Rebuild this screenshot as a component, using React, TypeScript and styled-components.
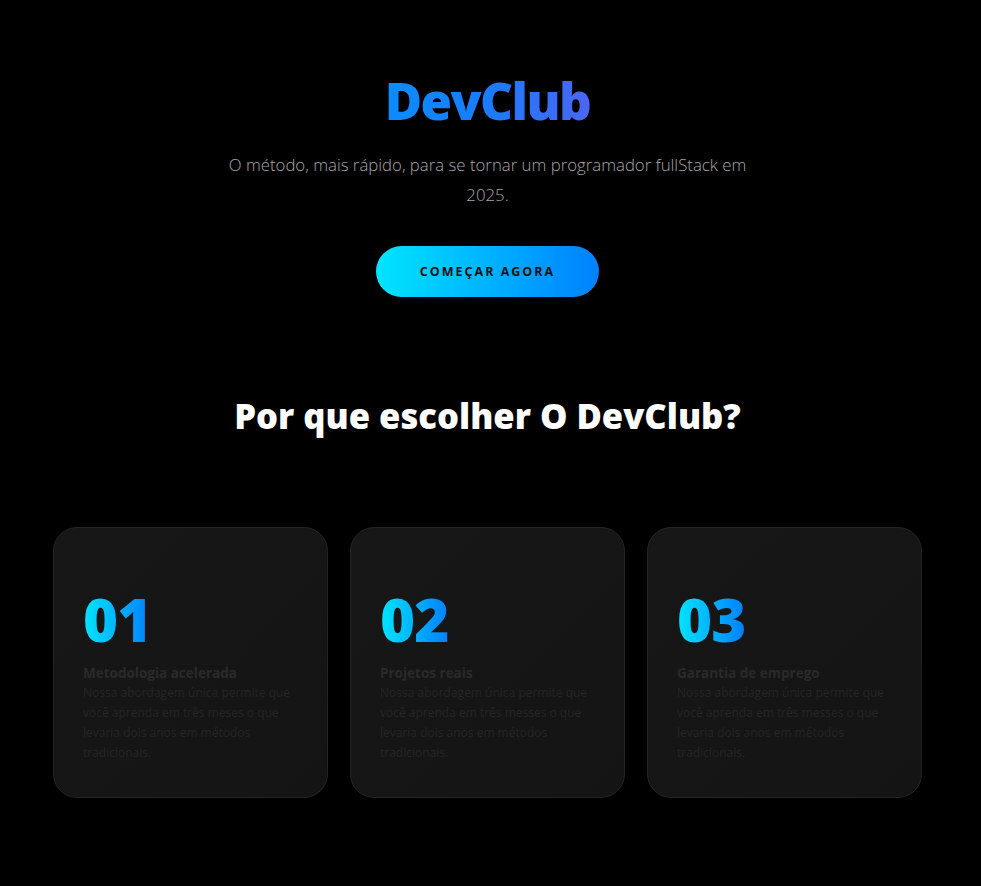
import React from "react";
import styled, { createGlobalStyle } from "styled-components";

const Global = createGlobalStyle`
  html, body { margin: 0; padding: 0; background: #000; }
  body { font-family: "Open Sans", "Noto Sans", sans-serif; color: #fff; }
  * { box-sizing: border-box; }
`;

const Page = styled.main`
  min-height: 886px;
  background: #000;
  padding-right: 6px;
  display: flex;
  flex-direction: column;
  align-items: center;
`;

const Hero = styled.section`
  display: flex;
  flex-direction: column;
  align-items: center;
  padding-top: 68px;
`;

const Logo = styled.h1`
  margin: 0;
  font-size: 51px;
  font-weight: 800;
  line-height: 64px;
  letter-spacing: -1.6px;
  background: linear-gradient(90deg, #0a8cff 0%, #1a7cff 50%, #4a66f2 100%);
  -webkit-background-clip: text;
  background-clip: text;
  color: transparent;
`;

const Subtitle = styled.p`
  margin: 18px 0 0;
  max-width: 540px;
  text-align: center;
  font-size: 16.8px;
  font-weight: 300;
  line-height: 30px;
  color: #a8a8a8;
`;

const Cta = styled.button`
  margin-top: 36px;
  width: 223px;
  height: 51px;
  border: none;
  border-radius: 26px;
  background: linear-gradient(90deg, #00e5ff 0%, #0080ff 100%);
  font-family: "Open Sans", sans-serif;
  font-size: 12.5px;
  font-weight: 700;
  letter-spacing: 2px;
  color: #111;
  cursor: pointer;
`;

const Features = styled.section`
  display: flex;
  flex-direction: column;
  align-items: center;
  padding-top: 96px;
  width: 100%;
`;

const SectionTitle = styled.h2`
  margin: 0;
  font-size: 34.6px;
  font-weight: 800;
  line-height: 46px;
  color: #fff;
`;

const Grid = styled.div`
  margin-top: 88px;
  display: grid;
  grid-template-columns: repeat(3, 275px);
  gap: 22px;
`;

const Card = styled.article`
  height: 271px;
  border-radius: 24px;
  border: 1px solid #242424;
  background: linear-gradient(135deg, #171717 0%, #141414 100%);
  padding: 55px 30px 0 29px;
  display: flex;
  flex-direction: column;
`;

const Num = styled.span`
  align-self: flex-start;
  font-size: 60px;
  font-weight: 800;
  line-height: 72px;
  letter-spacing: -1px;
  background: linear-gradient(90deg, #00e5ff 0%, #0080ff 100%);
  -webkit-background-clip: text;
  background-clip: text;
  color: transparent;
`;

const CardTitle = styled.h3`
  margin: 8px 0 0;
  font-size: 13.5px;
  font-weight: 700;
  line-height: 20px;
  color: #2a2a2a;
`;

const CardText = styled.p`
  margin: 0;
  max-width: 212px;
  font-size: 12px;
  line-height: 20px;
  color: #252525;
`;

const items = [
  { n: "01", t: "Metodologia acelerada", d: "Nossa abordagem única permite que você aprenda em três meses o que levaria dois anos em métodos tradicionais." },
  { n: "02", t: "Projetos reais", d: "Nossa abordagem única permite que você aprenda em três messes o que levaria dois anos em métodos tradicionais." },
  { n: "03", t: "Garantia de emprego", d: "Nossa abordagem única permite que você aprenda em três messes o que levaria dois anos em métodos tradicionais." },
];

export default function App() {
  return (
    <>
      <Global />
      <Page>
        <Hero>
          <Logo>DevClub</Logo>
          <Subtitle>O método, mais rápido, para se tornar um programador fullStack em 2025.</Subtitle>
          <Cta>COMEÇAR AGORA</Cta>
        </Hero>
        <Features>
          <SectionTitle>Por que escolher O DevClub?</SectionTitle>
          <Grid>
            {items.map((it) => (
              <Card key={it.n}>
                <Num>{it.n}</Num>
                <CardTitle>{it.t}</CardTitle>
                <CardText>{it.d}</CardText>
              </Card>
            ))}
          </Grid>
        </Features>
      </Page>
    </>
  );
}
